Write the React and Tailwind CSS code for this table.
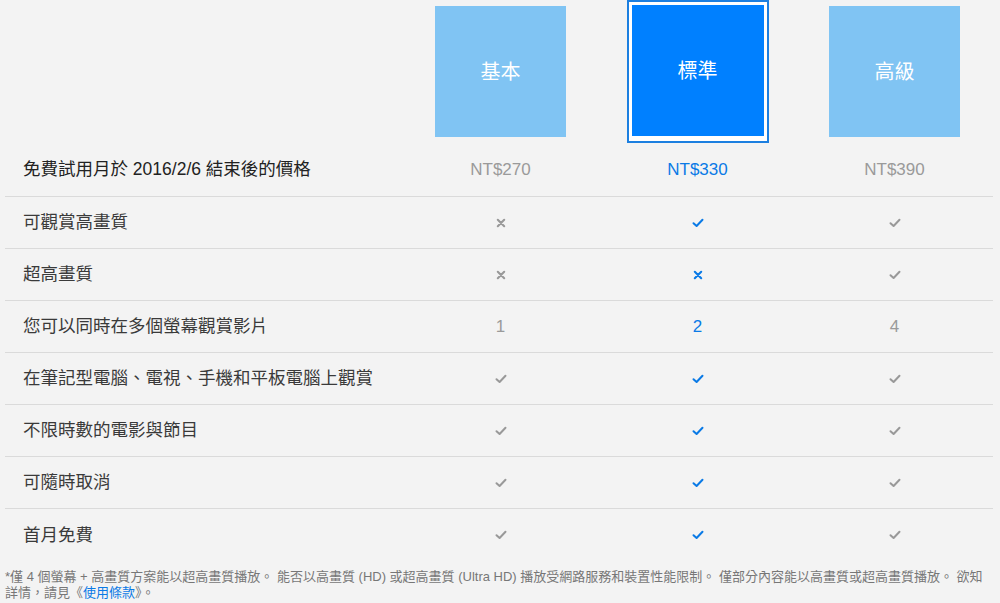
import React from 'react';

const GRAY = '#999999';
const BLUE = '#0a7ae6';

const Check = ({ color }) => (
    <svg width="12" height="10" viewBox="0 0 12 10" className="inline-block">
        <path d="M1.5 5.2 L4.6 8 L10.5 1.8" fill="none" stroke={color} strokeWidth="2" strokeLinecap="round" strokeLinejoin="round" />
    </svg>
);

const Cross = ({ color }) => (
    <svg width="10" height="10" viewBox="0 0 10 10" className="inline-block">
        <path d="M1.8 1.8 L8.2 8.2 M8.2 1.8 L1.8 8.2" fill="none" stroke={color} strokeWidth="2.1" strokeLinecap="round" />
    </svg>
);

const rows = [
    { label: '可觀賞高畫質', cells: ['x', 'v', 'v'] },
    { label: '超高畫質', cells: ['x', 'x', 'v'] },
    { label: '您可以同時在多個螢幕觀賞影片', cells: ['1', '2', '4'] },
    { label: '在筆記型電腦、電視、手機和平板電腦上觀賞', cells: ['v', 'v', 'v'] },
    { label: '不限時數的電影與節目', cells: ['v', 'v', 'v'] },
    { label: '可隨時取消', cells: ['v', 'v', 'v'] },
    { label: '首月免費', cells: ['v', 'v', 'v'] },
];

const Cell = ({ value, active }) => {
    const color = active ? BLUE : GRAY;
    if (value === 'v') return <Check color={color} />;
    if (value === 'x') return <Cross color={color} />;
    return <span className={active ? 'text-[#0a7ae6]' : 'text-[#9a9a9a]'}>{value}</span>;
};

export default function App() {
    return (
        <div
            className="h-[603px] w-[1000px] overflow-hidden bg-[#f3f3f3]"
            style={{ fontFamily: '"Liberation Sans", "Noto Sans CJK TC", sans-serif' }}
        >
            <div className="ml-[5px] w-[988px]">
                {/* plan headers */}
                <div className="grid h-[143px] grid-cols-[397px_197px_197px_197px]">
                    <div />
                    <div className="flex justify-center pt-[6px]">
                        <div className="flex h-[131px] w-[131px] items-center justify-center bg-[#80c4f3] pt-[1px] text-[20px] text-white">基本</div>
                    </div>
                    <div className="flex justify-center">
                        <div className="h-[143px] w-[142px] border-2 border-[#1c7fe0] bg-white p-[3px]">
                            <div className="flex h-[131px] w-[132px] items-center justify-center bg-[#0080ff] pt-[1px] text-[20px] text-white">標準</div>
                        </div>
                    </div>
                    <div className="flex justify-center pt-[6px]">
                        <div className="flex h-[131px] w-[131px] items-center justify-center bg-[#80c4f3] pt-[1px] text-[20px] text-white">高級</div>
                    </div>
                </div>

                {/* price row */}
                <div className="grid h-[54px] grid-cols-[397px_197px_197px_197px] items-center border-b border-[#dadada] text-[17px]">
                    <div className="pl-[18px] text-[17.5px] text-[#222222]">免費試用月於 2016/2/6 結束後的價格</div>
                    <div className="text-center text-[#9a9a9a]">NT$270</div>
                    <div className="text-center text-[#0a7ae6]">NT$330</div>
                    <div className="text-center text-[#9a9a9a]">NT$390</div>
                </div>

                {rows.map((row, i) => (
                    <div
                        key={row.label}
                        className={`grid h-[52px] grid-cols-[397px_197px_197px_197px] items-center text-[17px] ${i < rows.length - 1 ? 'border-b border-[#dadada]' : ''}`}
                    >
                        <div className="pl-[18px] text-[17.5px] text-[#3a3a3a]">{row.label}</div>
                        {row.cells.map((c, j) => (
                            <div key={j} className="flex justify-center">
                                <Cell value={c} active={j === 1} />
                            </div>
                        ))}
                    </div>
                ))}
            </div>

            <div className="mt-[8px] pl-[5px] text-[13px] leading-[16px] text-[#777777]">
                <div className="whitespace-nowrap">
                    *僅 4 個螢幕 + 高畫質方案能以超高畫質播放。 能否以高畫質 (HD) 或超高畫質 (Ultra HD) 播放受網路服務和裝置性能限制。 僅部分內容能以高畫質或超高畫質播放。 欲知
                </div>
                <div className="whitespace-nowrap">
                    詳情，請見《<span className="text-[#0a7ae6]">使用條款</span>》。
                </div>
            </div>
        </div>
    );
}
